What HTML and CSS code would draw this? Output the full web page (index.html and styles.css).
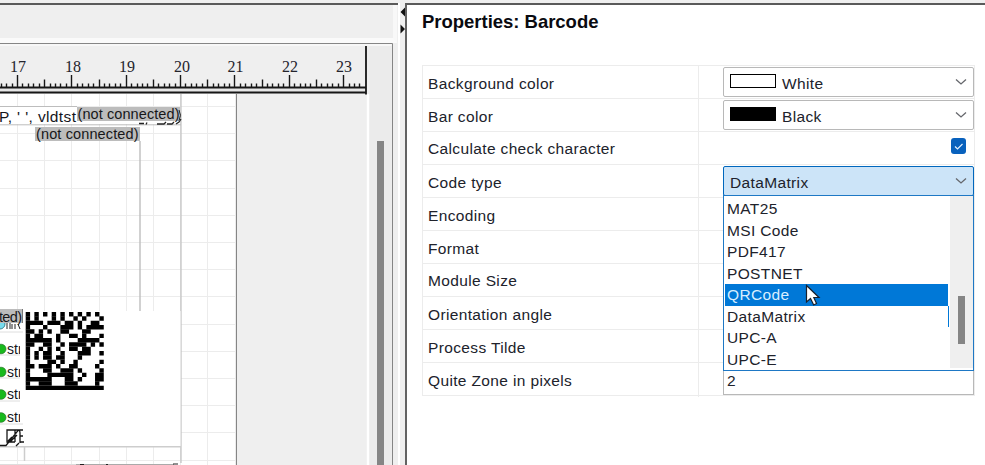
FILE: index.html
```html
<!DOCTYPE html>
<html lang="en">
<head>
<meta charset="utf-8">
<title>Properties: Barcode</title>
<link rel="stylesheet" href="styles.css">
</head>
<body>
<div class="app">
  <section class="designer">
    <div class="toolbar"></div>
    <svg class="canvas" width="394" height="422" viewBox="0 43 394 422">
      <defs>
        <clipPath id="page"><rect x="0" y="94" width="236" height="371"/></clipPath>
      </defs>
      <rect x="0" y="43" width="394" height="422" fill="#efefef"/>
      <path d="M0 43.5H392.5V465" fill="none" stroke="#858585"/>
      <path d="M0 45H391.5" stroke="#fff"/>
      <rect x="0" y="94" width="236" height="371" fill="#fff"/>
      <g id="grid" clip-path="url(#page)" stroke="#ececec"></g>
      <path d="M236.5 94V465" stroke="#858585"/>
      <path d="M368 94V465" stroke="#fff" stroke-width="2.4"/>
      <rect x="369.5" y="46" width="22" height="419" fill="#ebebeb"/>
      <rect x="377" y="141" width="7" height="324" fill="#858585"/>
      <g id="ticks" stroke="#161616" stroke-width="1.4"></g>
      <rect x="0" y="88" width="366" height="4" fill="#e6e6e6"/>
      <path d="M0 87.5H366M0 92.5H366M366 46V94.5" stroke="#161616" stroke-width="1.8"/>
      <g class="numbers">
        <text x="18" y="71.5">17</text><text x="73" y="71.5">18</text><text x="127" y="71.5">19</text><text x="182" y="71.5">20</text><text x="235.5" y="71.5">21</text><text x="290" y="71.5">22</text><text x="344" y="71.5">23</text>
      </g>
      <path d="M0 106.5H77" stroke="#bdbdbd"/>
      <path d="M140 141V311" stroke="#bebebe" stroke-width="1.4"/>
      <path d="M181 94V463" stroke="#c4c4c4" stroke-width="1.3"/>
      <rect x="0" y="107" width="180" height="17" fill="#fff"/>
      <path d="M0 124.8H181" stroke="#bdbdbd"/>
      <text class="field" x="-1" y="122" textLength="77">P, ' ', vldtst</text>
      <path d="M139 123.5h5M147 122.5l-1 2M157 124h7l2-2M167 124h5l2-2M176 124l3-2 2-3" stroke="#222" fill="none" stroke-width="1.3"/>
      <rect x="77" y="107" width="103" height="14" fill="#bcbcbc"/>
      <rect x="35" y="127" width="105" height="14" fill="#bcbcbc"/>
      <text class="tag" x="77.500" y="119" textLength="102">(not connected)</text>
      <path d="M179 110q3 5 0 11" fill="none" stroke="#222"/>
      <text class="tag" x="36" y="138.500" textLength="102.500">(not connected)</text>
      <rect x="0" y="311" width="180.500" height="135" fill="#fff"/>
      <path d="M0 446.800H181M24.500 447V461" stroke="#cdcdcd" stroke-width="1.500"/>
      <path d="M0 332H23M0 355H23M0 378H23M0 401H23M0 424H23" stroke="#dedede"/>
      <g fill="#18b91c" stroke="#28752a" stroke-width=".7">
        <ellipse cx="1" cy="349" rx="5" ry="4.800"/><ellipse cx="1" cy="372" rx="5" ry="4.800"/><ellipse cx="1" cy="394.500" rx="5" ry="4.800"/><ellipse cx="1" cy="417.500" rx="5" ry="4.800"/>
      </g>
      <circle cx="0" cy="324" r="5" fill="#77dcee" stroke="#388491"/>
      <path d="M7 323v6M10 323v6M12 324v5M15 324v5M18 324l2 5" stroke="#222"/>
      <rect x="0" y="309" width="22" height="14" fill="#bcbcbc"/>
      <path d="M22.500 309V323" stroke="#777"/>
      <text class="tag" x="-1" y="321.500" textLength="23">ted)</text>
      <g class="small"><text x="7" y="353.500">str</text><text x="7" y="376.500">str</text><text x="7" y="399">str</text><text x="7" y="422">str</text></g>
      <rect x="20" y="340" width="4" height="83" fill="#fff"/>
      <path d="M23 430H7V442H15M0 445.500H6L18 430.500Q20 430 20 433V443M15 430V442M8 441L12 437M10 442L17 435M20 436H23M20 442H24M16 446l3-3" fill="none" stroke="#161616" stroke-width="1.300"/>
      <path d="M76 464.500H174" stroke="#aaa"/><path d="M0 464.500H76" stroke="#ddd"/>
      <path d="M80 464.500H84M106 464.500H108M173 464H178" stroke="#222"/>
      <g id="matrix"></g>
    </svg>
  </section>
  <div class="splitter">
    <svg width="5" height="40" viewBox="0 0 5 40"><path d="M5 3.500V12.500L.5 8ZM.5 20.500V29.500L5 25Z" fill="#111"/></svg>
  </div>
  <aside class="properties">
    <h1>Properties: Barcode</h1>
    <div class="table">
      <div class="row"><span class="name">Background color</span><div class="cell"><div class="select"><i class="swatch"></i><span>White</span><svg class="chev" width="12" height="8"><path d="M1 1.500L6 6L11 1.500"/></svg></div></div></div>
      <div class="row"><span class="name">Bar color</span><div class="cell"><div class="select"><i class="swatch black"></i><span>Black</span><svg class="chev" width="12" height="8"><path d="M1 1.500L6 6L11 1.500"/></svg></div></div></div>
      <div class="row"><span class="name raised">Calculate check character</span><div class="cell check"><svg width="15" height="16"><rect width="15" height="16" rx="3" fill="#0861bd"/><path d="M4 8.500L6.500 11L11.500 6" fill="none" stroke="#e2f0ff" stroke-width="1.200"/></svg></div></div>
      <div class="row"><span class="name">Code type</span><div class="cell"><div class="select open"><span>DataMatrix</span><svg class="chev" width="12" height="8"><path d="M1 1.500L6 6L11 1.500"/></svg>
        <div class="menu">
          <ul><li>MAT25</li><li>MSI Code</li><li>PDF417</li><li>POSTNET</li><li class="hot">QRCode</li><li class="current">DataMatrix</li><li>UPC-A</li><li>UPC-E</li></ul>
          <div class="track"><div class="thumb"></div></div>
          <svg class="cursor" width="16" height="23" viewBox="0 0 16 23"><path d="M1.500 1.500V18L5.500 14.500L8.700 21L11.500 19.500L8.800 13.500H14Z" fill="#fff" stroke="#19202b" stroke-width="1.200"/></svg>
        </div></div></div></div>
      <div class="row"><span class="name">Encoding</span><div class="cell"></div></div>
      <div class="row"><span class="name">Format</span><div class="cell"></div></div>
      <div class="row"><span class="name raised">Module Size</span><div class="cell"></div></div>
      <div class="row"><span class="name">Orientation angle</span><div class="cell"></div></div>
      <div class="row"><span class="name">Process Tilde</span><div class="cell"></div></div>
      <div class="row"><span class="name">Quite Zone in pixels</span><div class="cell"><div class="input">2</div></div></div>
    </div>
  </aside>
</div>
<script src="script.js"></script>
</body>
</html>
```
FILE: styles.css
```css
* { box-sizing: border-box; }
body { margin: 0; overflow: hidden; background: #efefef; font-family: "Liberation Sans", Arial, sans-serif; color: #20222b; }
.app { display: flex; width: 985px; height: 465px; padding-top: 3px; }
.designer { width: 398px; border-top: 2px solid #5a5a5a; background: #efefef; }
.toolbar { height: 38px; border-bottom: 5px solid #fafafa; border-right: 4px solid #f8f8f8; margin-right: 1px; }
.designer .canvas { display: block; }
.canvas { width: 394px; height: 422px; }
.splitter { width: 7px; border-left: 2px solid #fff; padding-top: 1px; }
.splitter svg { display: block; }
.properties { flex: 1; border-top: 2px solid #5a5a5a; border-left: 2px solid #626262; background: #fff; padding: 6px 10px 0 15px; }
h1 { margin: 0; height: 54px; font-size: 18.5px; line-height: 22px; font-weight: 700; color: #0a0a10; letter-spacing: -.02px; white-space: nowrap; }
.table { width: 553px; border: 1px solid #ececec; border-bottom: 0; font-size: 15.5px; letter-spacing: .36px; }
.row { display: grid; grid-template-columns: 276px 1fr; height: 33px; border-bottom: 1px solid #ececec; }
.name { padding: 2px 0 0 5px; line-height: 32px; border-right: 1px solid #ececec; white-space: nowrap; }
.name.raised { line-height: 30px; }
.cell { padding: 1px 0 0 24px; }
.select { position: relative; display: flex; align-items: center; height: 30px; padding: 3px 6px 0 6px; border: 1px solid #b8b8b8; border-radius: 2px; }
.swatch { width: 46px; height: 14px; border: 1px solid #000; margin: 0 6px 5px 0; }
.swatch.black { background: #000; }
.chev { margin: 0 0 3px auto; fill: none; stroke: #65676c; stroke-width: 1.3; }
.select.open { background: #cce4f8; border-color: #0067bd; }
.cell.check { display: flex; align-items: flex-start; justify-content: flex-end; padding: 6px 8px 0 0; }
.menu { position: absolute; z-index: 2; left: -1px; top: 28px; width: 251px; height: 176px; display: flex; border: 1px solid #1e78c5; background: #fff; }
ul { flex: 1; margin: 0; padding: 2px 2px 0 1px; list-style: none; }
li { height: 21.5px; line-height: 21px; padding-left: 2px; }
.hot { background: #0078d7; color: #d9eeff; }
.current { border-right: 1px solid #0078d7; margin-right: -1px; }
.track { width: 23px; margin-bottom: 2px; padding: 100px 7px 0 8px; background: #efefef; }
.thumb { height: 48px; width: 7px; background: #858585; }
.cursor { position: absolute; left: 81px; top: 88px; }
.input { height: 31px; border: 1px solid #b8b8b8; padding: 0 3px; line-height: 32px; }
.numbers { font: 16px "Liberation Serif", serif; text-anchor: middle; fill: #24242c; }
.field { font-size: 15.5px; fill: #15151b; }
.tag { font-size: 14.5px; fill: #171719; }
.small { font-size: 14px; fill: #15151b; }
```
FILE: script.js
```js
const ns = "http://www.w3.org/2000/svg";
const line = (parent, d) => {
  const p = document.createElementNS(ns, "path");
  p.setAttribute("d", d);
  document.getElementById(parent).appendChild(p);
  return p;
};

for (let i = -3; i <= 64; i++) {
  const x = Math.round(17 + i * 5.435) + 0.5;
  const top = i % 10 === 0 ? 75 : i % 5 === 0 ? 79.5 : 83.5;
  if (x > 0 && x < 363) line("ticks", `M${x} ${top}V87.5`);
}
for (let x = 17; x < 236; x += 27.2) line("grid", `M${Math.round(x) + 0.5} 94V465`);
for (let y = 106; y < 465; y += 27.2) line("grid", `M0 ${Math.round(y) + 0.5}H236`);

const modules = [
  "101010101010101010",
  "101000101001010001",
  "111101110110100110",
  "100010001110101111",
  "110101001100011000",
  "101100010011010001",
  "111111010000111110",
  "110011001011110101",
  "100101010011011000",
  "101011001000111001",
  "101011011000100000",
  "100001101001000001",
  "110111010011000010",
  "100011001110100001",
  "100001111110010011",
  "111111000110100011",
  "100111000111000010",
  "111111111111111111"
];
const size = 78 / 18;
modules.forEach((row, y) => {
  let d = "";
  [...row].forEach((bit, x) => {
    if (bit === "1") d += `M${25.7 + x * size} ${312 + y * size}h4.4v4.4h-4.4z`;
  });
  line("matrix", d);
});
```
